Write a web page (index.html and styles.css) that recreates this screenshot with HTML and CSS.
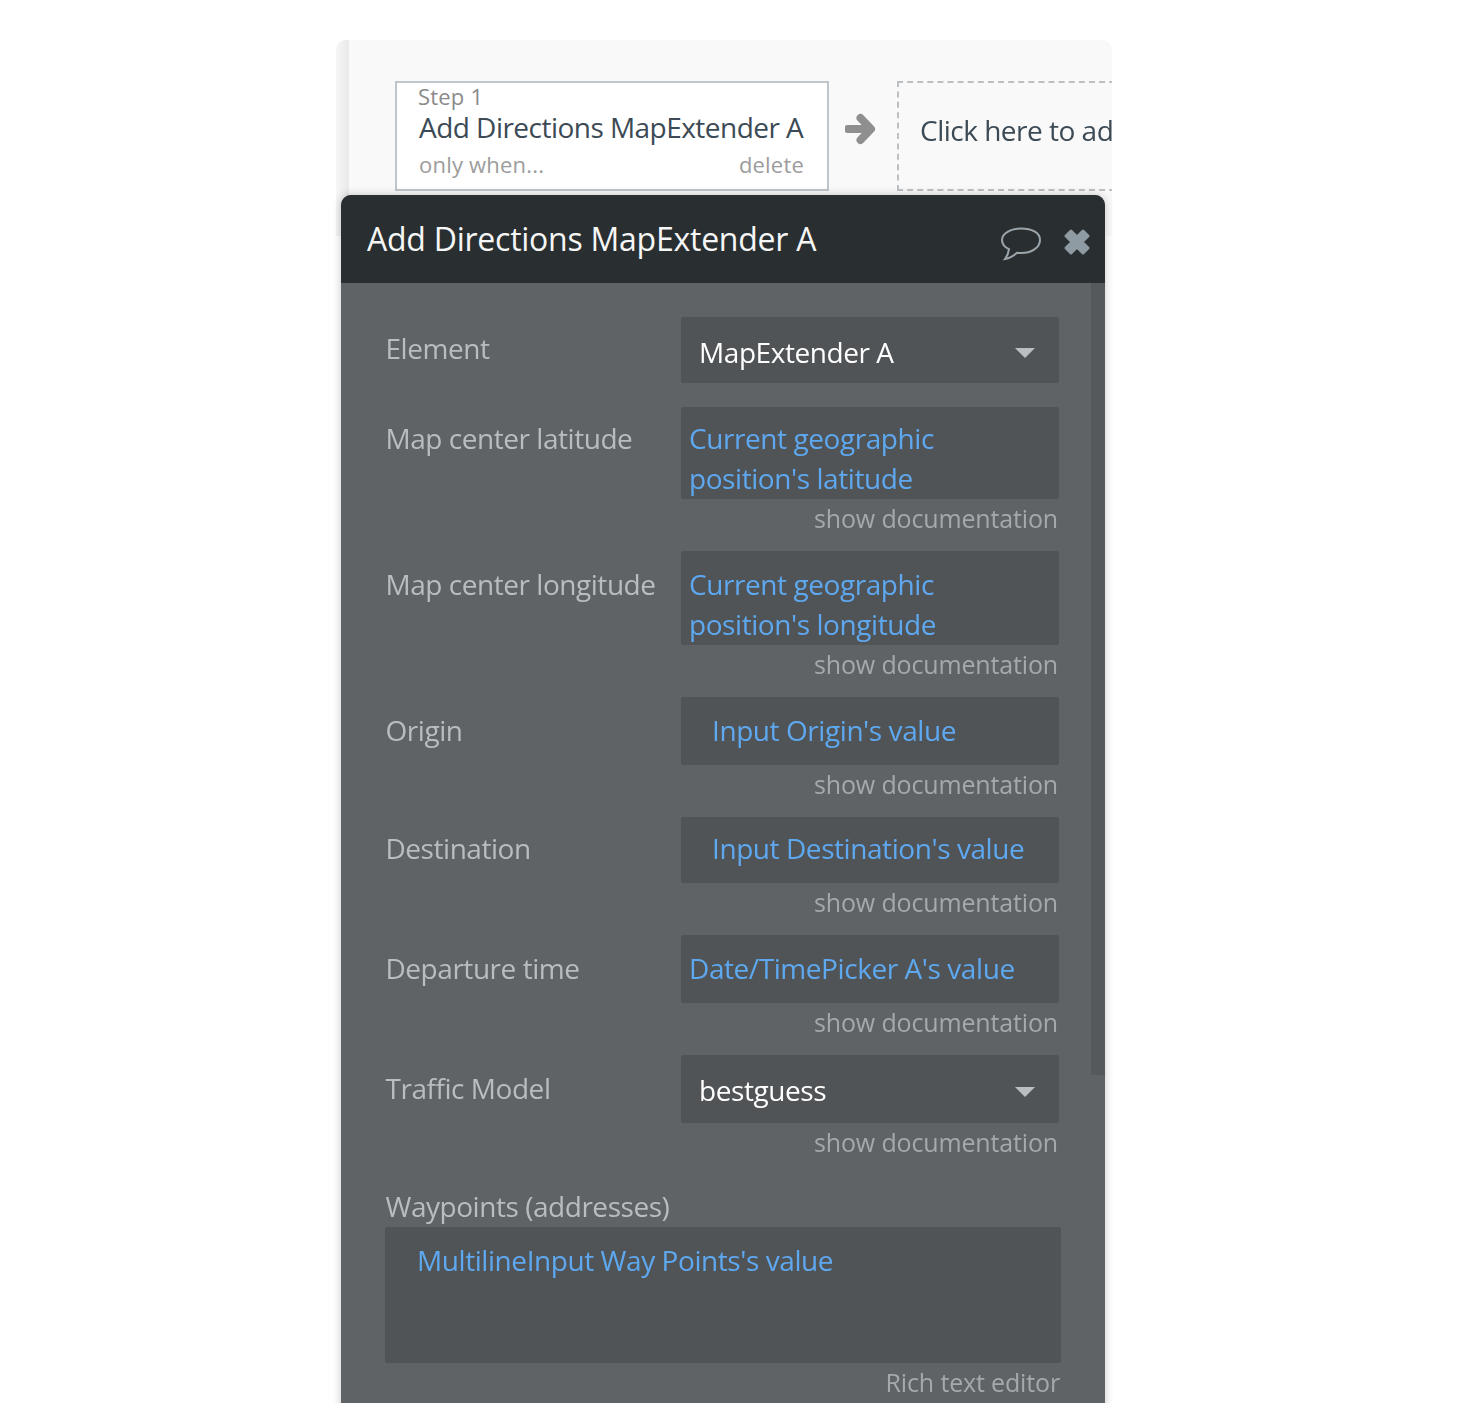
FILE: index.html
```html
<!DOCTYPE html>
<html lang="en">
<head>
<meta charset="utf-8">
<title>Add Directions MapExtender A</title>
<link rel="stylesheet" href="styles.css">
</head>
<body>
<div class="stage">
  <section class="flow">
    <div class="step">
      <div class="step-num">Step 1</div>
      <div class="step-title">Add Directions MapExtender A</div>
      <div class="step-foot"><span>only when...</span><span>delete</span></div>
    </div>
    <svg class="arrow" width="32" height="32" viewBox="0 0 32 32"><path d="M3 16h20M15.500 5L26 16 15.500 27" fill="none" stroke="#8f8f8f" stroke-width="8" stroke-linecap="round" stroke-linejoin="round"/></svg>
    <div class="add-step">Click here to add an action...</div>
  </section>
  <section class="panel">
    <header class="panel-head">
      <h1>Add Directions MapExtender A</h1>
      <svg class="comment" width="40" height="34" viewBox="0 0 40 34"><path d="M20 1.500C9.500 1.500 1 6.800 1 13c0 4 2.800 7.200 7 9.200-.4 3.500-1.800 7-4 9.800 4.500-.8 9-3.500 12-6.300 1.300.2 2.700.3 4 .3 10.500 0 19-5.500 19-13S30.500 1.500 20 1.500z" fill="none" stroke="#9aa5ab" stroke-width="2"/></svg>
      <svg class="close" width="28" height="28" viewBox="0 0 28 28"><path d="M3 8l5-5 6 6 6-6 5 5-6 6 6 6-5 5-6-6-6 6-5-5 6-6z" fill="#8e9ba2" stroke="#8e9ba2" stroke-width="3" stroke-linejoin="round"/></svg>
    </header>
    <div class="panel-body">
      <div class="scrollbar"></div>
      <div class="row row-element">
        <label>Element</label>
        <div class="field select h66"><span>MapExtender A</span><i class="caret"></i></div>
      </div>
      <div class="row up">
        <label>Map center latitude</label>
        <div class="field dyn h92">Current geographic<br>position's latitude</div>
      </div>
      <div class="doc">show documentation</div>
      <div class="row down">
        <label>Map center longitude</label>
        <div class="field dyn h94">Current geographic<br>position's longitude</div>
      </div>
      <div class="doc">show documentation</div>
      <div class="row down">
        <label>Origin</label>
        <div class="field dyn indent h68">Input Origin's value</div>
      </div>
      <div class="doc">show documentation</div>
      <div class="row up">
        <label>Destination</label>
        <div class="field dyn indent h66">Input Destination's value</div>
      </div>
      <div class="doc">show documentation</div>
      <div class="row down">
        <label>Departure time</label>
        <div class="field dyn h68">Date/TimePicker A's value</div>
      </div>
      <div class="doc">show documentation</div>
      <div class="row row-traffic down">
        <label>Traffic Model</label>
        <div class="field select h68"><span>bestguess</span><i class="caret"></i></div>
      </div>
      <div class="doc">show documentation</div>
      <div class="wp-label">Waypoints (addresses)</div>
      <div class="wp-box">MultilineInput Way Points's value</div>
      <div class="rte">Rich text editor</div>
    </div>
  </section>
</div>
</body>
</html>
```
FILE: styles.css
```css
* { box-sizing: border-box; }
html, body { margin: 0; padding: 0; background: #fff; }
body { font-family: "Open Sans", "Liberation Sans", sans-serif; }
.stage { position: relative; width: 1460px; height: 1403px; overflow: hidden; padding: 40px 348px 0 336px; filter: blur(.45px); }
.flow {
  width: 776px; height: 196px; border-radius: 10px 10px 0 0;
  background: linear-gradient(to right, #f6f6f6 0, #e9e9e9 13px, #f9f9f9 13px);
  display: flex; align-items: flex-start; padding: 41px 0 0 59px; overflow: hidden;
}
.step { flex: none; width: 434px; height: 110px; background: #fff; border: 2px solid #bcc6cb; padding: 0 23px 0 21px; }
.step-num { font-size: 22px; line-height: 26px; color: #8a8a8a; letter-spacing: .2px; }
.step-title { padding-left: 1px; font-size: 28px; line-height: 36px; color: #3c4a55; letter-spacing: -.53px; white-space: nowrap; }
.step-foot { display: flex; justify-content: space-between; padding-left: 1px; font-size: 22px; line-height: 38px; color: #9c9c9c; letter-spacing: .2px; }
.arrow { flex: none; margin: 32px 20px 0 16px; }
.add-step {
  flex: none; width: 400px; height: 110px; border: 2px dashed #bcc0c2; padding: 0 0 0 21px;
  font-size: 28px; line-height: 94px; color: #3c4a55; letter-spacing: -.5px; white-space: nowrap;
}
.panel {
  position: absolute; left: 341px; top: 195px; width: 764px; height: 1240px;
  border-radius: 10px 10px 0 0; background: #5f6366; box-shadow: 0 0 10px rgba(0,0,0,.22);
}
.panel-head { height: 88px; background: #292f31; border-radius: 10px 10px 0 0; display: flex; align-items: center; padding: 0 14px 0 26px; }
.panel-head h1 { flex: 1; margin: 0; font-size: 32px; font-weight: 400; line-height: 88px; color: #f6f6f6; letter-spacing: -.25px; white-space: nowrap; }
.comment { flex: none; margin: 10px 22px 0 0; }
.close { flex: none; margin: 6px 0 0 0; }
.panel-body { position: relative; padding: 34px 46px 0 45px; }
.scrollbar { position: absolute; top: 0; right: 0; width: 14px; height: 792px; background: #55595c; }
.row { display: grid; grid-template-columns: 295px 378px; }
.row label { font-size: 28px; line-height: 32px; padding-top: 16px; margin-left: -.5px; color: #b8bdbf; letter-spacing: -.46px; white-space: nowrap; }
.field { background: #505457; border-radius: 2px; font-size: 28px; letter-spacing: -.43px; }
.h66 { height: 66px; } .h68 { height: 68px; } .h92 { height: 92px; } .h94 { height: 94px; }
.row-element { margin-bottom: 24px; }
.row-element label { padding-top: 15px; }
.select { display: flex; align-items: center; justify-content: space-between; padding: 2px 24px 0 18px; color: #fff; }
.row-element .select { padding-top: 4px; }
.caret { width: 0; height: 0; margin-top: 3px; border: 10px solid transparent; border-top: 10px solid #b9bec1; border-bottom: 0; }
.row-element .caret { margin-top: 1px; }
.dyn { color: #5ea8f0; line-height: 40px; padding: 12px 0 0 8px; white-space: nowrap; }
.dyn.indent { padding-left: 31px; }
.up label { padding-top: 15px; }
.up .dyn { padding-top: 11px; }
.down label { padding-top: 17px; }
.down .dyn { padding-top: 13px; }
.doc { height: 52px; text-align: right; padding-right: 1px; font-size: 25px; line-height: 38px; color: #a5a9ab; letter-spacing: -.15px; }
.wp-label { margin: 11px 0 0 -.5px; font-size: 28px; line-height: 40px; height: 41px; color: #b8bdbf; letter-spacing: -.46px; }
.wp-box { width: 676px; height: 136px; margin-left: -1px; background: #505457; border-radius: 2px; padding: 13px 0 0 32px; font-size: 28px; line-height: 40px; color: #5ea8f0; letter-spacing: -.43px; }
.rte { width: 676px; margin-left: -1px; padding-right: 1px; text-align: right; font-size: 25px; line-height: 38px; color: #a5a9ab; letter-spacing: -.15px; }
```
